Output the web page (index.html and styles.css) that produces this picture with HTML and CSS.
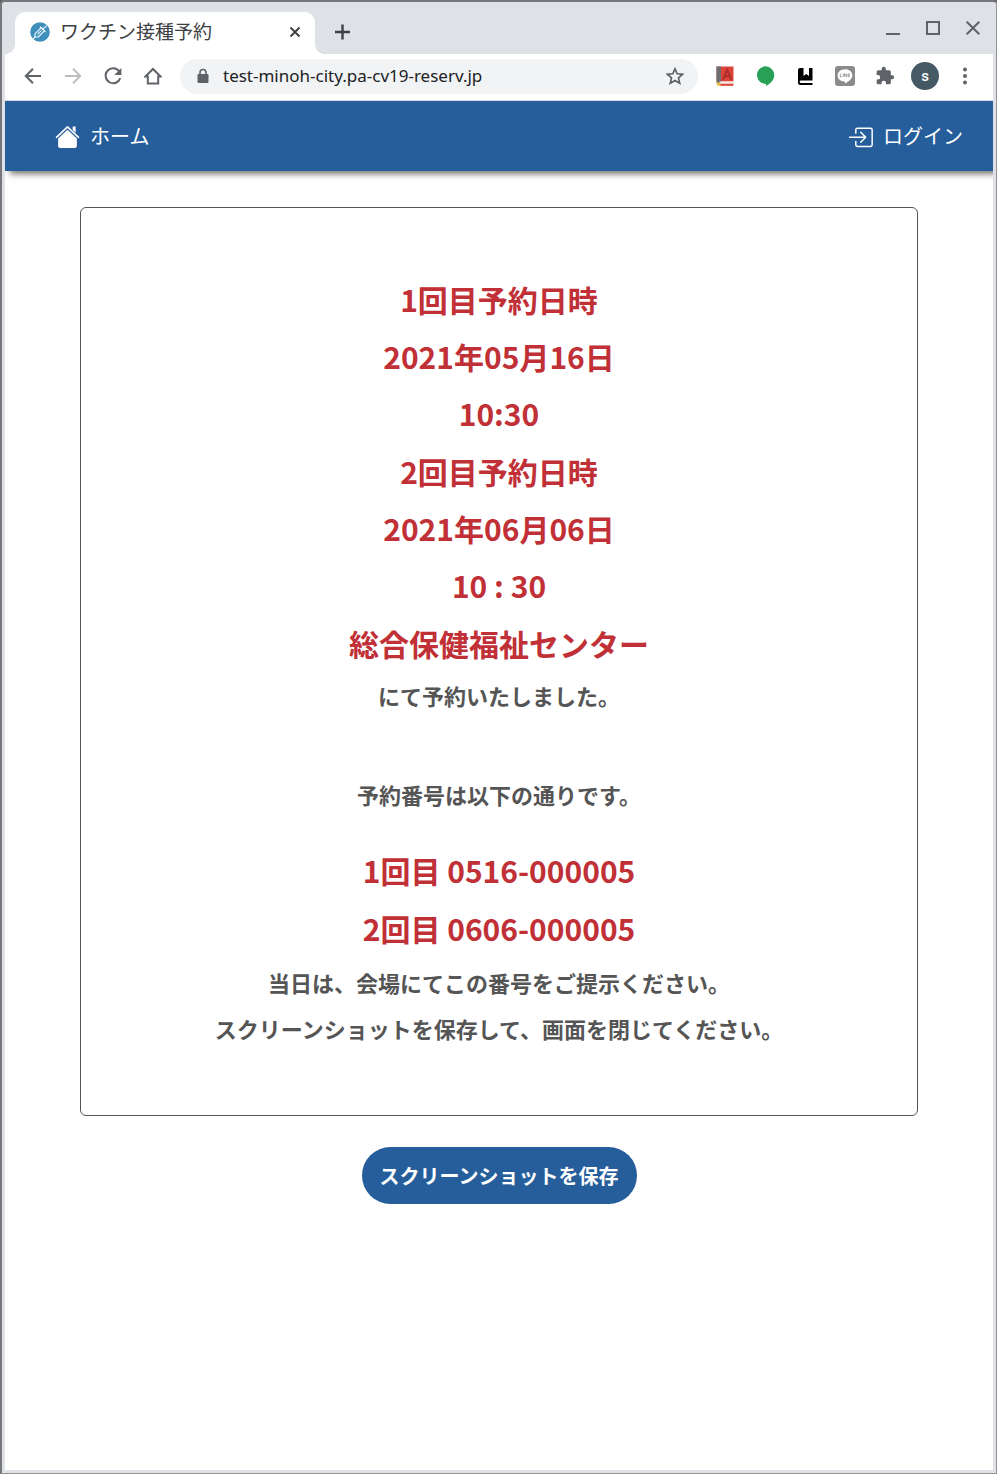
FILE: index.html
```html
<!DOCTYPE html>
<html lang="ja">
<head>
<meta charset="utf-8">
<meta name="viewport" content="width=device-width, initial-scale=1">
<title>ワクチン接種予約</title>
<link rel="stylesheet" href="styles.css">
</head>
<body>
<div class="window">
  <header class="tab-strip">
    <div class="tab">
      <svg class="favicon" viewBox="0 0 20 20" aria-hidden="true"><circle cx="10" cy="10" r="9.8" fill="#3f8fba"/><g fill="none" stroke="#e8f5fb" stroke-width="1.2" stroke-linecap="round" stroke-linejoin="round"><path d="M5 11.800 11.200 5.600 14.400 8.800 8.200 15 5 15z"/><path d="m10.400 4.800 4.800 4.800M13 7.200l3.400-3.400M5 15l-1.800 1.800M8 11.800l3-3"/></g></svg>
      <span class="tab-title">ワクチン接種予約</span>
      <button class="icon-button tab-close" aria-label="タブを閉じる"><svg viewBox="0 0 12 12"><path d="m1.5 1.5 9 9m0-9-9 9" stroke="#3c4043" stroke-width="1.9"/></svg></button>
    </div>
    <button class="icon-button new-tab" aria-label="新しいタブ"><svg viewBox="0 0 16 16"><path d="M8.500 .5v15M1 8h15" stroke="#3c4043" stroke-width="2.400"/></svg></button>
    <div class="window-controls">
      <button class="icon-button" aria-label="最小化"><svg viewBox="0 0 14 14"><path d="M0 13h14" stroke="#5f6368" stroke-width="2"/></svg></button>
      <button class="icon-button" aria-label="最大化"><svg viewBox="0 0 14 14"><path d="M1 1h12v12H1z" fill="none" stroke="#5f6368" stroke-width="2"/></svg></button>
      <button class="icon-button" aria-label="閉じる"><svg viewBox="0 0 14 14"><path d="m.7.7 12.6 12.6m0-12.6L.7 13.3" stroke="#5f6368" stroke-width="2"/></svg></button>
    </div>
  </header>

  <div class="toolbar">
    <div class="tool-group">
      <button class="icon-button" aria-label="戻る"><svg viewBox="0 0 18 18"><path d="M17 9H2M9 1.8 1.8 9 9 16.2" fill="none" stroke="#5f6368" stroke-width="2"/></svg></button>
      <button class="icon-button" aria-label="進む"><svg viewBox="0 0 18 18"><path d="M1 9h15M9 1.8 16.2 9 9 16.2" fill="none" stroke="#bcbec0" stroke-width="2"/></svg></button>
      <button class="icon-button" aria-label="再読み込み"><svg viewBox="0 0 18 18"><path d="M15.2 4.3A7.5 7.5 0 1 0 16.3 11" fill="none" stroke="#5f6368" stroke-width="2"/><path d="M17.4 1v7h-7z" fill="#5f6368"/></svg></button>
      <button class="icon-button" aria-label="ホームページ"><svg viewBox="0 0 18 18"><path d="M1.4 9.5 9 2l7.6 7.5h-2.4v7H3.8v-7z" fill="none" stroke="#5f6368" stroke-width="2"/></svg></button>
    </div>
    <div class="address-bar">
      <svg class="lock" viewBox="0 0 12 16" aria-hidden="true"><path d="M3 7V4.5a3 3 0 0 1 6 0V7" fill="none" stroke="#5f6368" stroke-width="1.6"/><rect x=".5" y="6" width="11" height="9" rx="1.2" fill="#5f6368"/></svg>
      <input class="url" type="text" aria-label="アドレス" value="test-minoh-city.pa-cv19-reserv.jp">
      <button class="icon-button" aria-label="ブックマーク"><svg viewBox="0 0 18 18"><path d="m9 1.8 2.2 5 5.4.5-4.1 3.6 1.2 5.3L9 13.4l-4.7 2.8 1.2-5.3-4.1-3.6 5.4-.5z" fill="none" stroke="#5f6368" stroke-width="1.7"/></svg></button>
    </div>
    <div class="tool-group">
      <button class="icon-button large" aria-label="辞書"><svg viewBox="0 0 20 20"><path d="M1.500 .5h17v15h-17z" fill="#db4437"/><path d="M1.500 .5H6v17H1.500z" fill="#6d6e70"/><path d="M4.500 15.500h14v2.300h-14z" fill="#f3e4e1"/><path d="M5 17.800h13.500v2H5z" fill="#db4437"/><path d="M2 16.200l2 .6 2.500 3L2 19.500z" fill="#f4b72f"/><path d="m8 13.500 4.200-10 4.200 10M9.500 10.200h5.400" fill="none" stroke="#ad2f2c" stroke-width="2"/></svg></button>
      <button class="icon-button large" aria-label="チャット"><svg viewBox="0 0 20 20"><path d="M10.500 .3a8.800 8.800 0 0 1 8.800 8.800c0 4.900-3.800 8.900-8.300 10.900v-2.100A8.800 8.800 0 1 1 10.500 .3z" fill="#28a055"/></svg></button>
      <button class="icon-button large" aria-label="読書メモ"><svg viewBox="0 0 20 20"><path d="M5 2h3.500v8l2.700-2 2.800 2V2h3.500v12.500H5.700c-1.400 0-1.400 2.500 0 2.500h11.800v2H5a2.200 2.200 0 0 1-2-2.500V4a2 2 0 0 1 2-2z" fill="#000"/></svg></button>
      <button class="icon-button large" aria-label="LINE"><svg viewBox="0 0 20 20"><rect width="20" height="20" rx="3" fill="#8b8b8b"/><path d="M10 3.2c4.2 0 7.4 2.7 7.4 6.2 0 3.2-3.6 5.800-7.400 8.200v-2.200c-4.600 0-7.400-2.600-7.400-6S5.800 3.200 10 3.200z" fill="#fff"/><path d="M5.300 7.600v3.200h1.800M8.200 7.600v3.200M9.600 10.800V7.600l2 3.200V7.600M14.900 7.900h-1.800v2.700h1.800M13.100 9.200h1.600" fill="none" stroke="#8b8b8b" stroke-width=".8"/></svg></button>
      <button class="icon-button large" aria-label="拡張機能"><svg viewBox="0 0 24 24"><path d="M20.500 11H19V7a2 2 0 0 0-2-2h-4V3.500a2.500 2.500 0 0 0-5 0V5H4a2 2 0 0 0-2 2v3.800h1.500a2.700 2.700 0 0 1 0 5.400H2V20a2 2 0 0 0 2 2h3.800v-1.500a2.700 2.700 0 0 1 5.400 0V22H17a2 2 0 0 0 2-2v-4h1.500a2.500 2.500 0 0 0 0-5z" fill="#5f6368"/></svg></button>
    </div>
    <button class="avatar" aria-label="プロフィール">s</button>
    <button class="icon-button menu" aria-label="メニュー"><svg viewBox="0 0 18 18"><g fill="#5f6368"><circle cx="9" cy="2.500" r="2"/><circle cx="9" cy="9" r="2"/><circle cx="9" cy="15.500" r="2"/></g></svg></button>
  </div>

  <div class="page">
    <nav class="site-nav">
      <a class="nav-link" href="#home"><svg viewBox="0 0 24 24" aria-hidden="true"><path d="M17 2.500h2.800v6l-2.800-3z" fill="#fff"/><path d="M1.400 12.800 12 2.800l10.600 10" fill="none" stroke="#fff" stroke-width="1.500" stroke-linecap="round" stroke-linejoin="round"/><path d="m12 5.400 9 8.400V21a2 2 0 0 1-2 2H5a2 2 0 0 1-2-2v-7.200z" fill="#fff"/></svg>ホーム</a>
      <a class="nav-link" href="#login"><svg viewBox="0 0 24 24" aria-hidden="true"><g fill="none" stroke="#fff" stroke-width="1.400" stroke-linecap="round" stroke-linejoin="round"><path d="M7.500 8.800V5.500A1.500 1.500 0 0 1 9 4h12.700a1.500 1.500 0 0 1 1.500 1.500v14.500a1.500 1.500 0 0 1-1.500 1.500H9A1.500 1.500 0 0 1 7.500 20v-3.200"/><path d="M1.500 12.800h15.500m-4.800-4.800 4.800 4.800-4.800 4.800"/></g></svg>ログイン</a>
    </nav>
    <main class="content">
      <section class="card">
        <div class="booking">
          <div class="slot"><p>1回目予約日時</p><p>2021年05月16日</p><p>10:30</p></div>
          <div class="slot"><p>2回目予約日時</p><p>2021年06月06日</p><p>10 : 30</p></div>
          <p>総合保健福祉センター</p>
        </div>
        <p class="note">にて予約いたしました。</p>
        <p class="note numbers-intro">予約番号は以下の通りです。</p>
        <div class="numbers"><p>1回目 0516-000005</p><p>2回目 0606-000005</p></div>
        <p class="note">当日は、会場にてこの番号をご提示ください。</p>
        <p class="note">スクリーンショットを保存して、画面を閉じてください。</p>
      </section>
      <button class="save-button">スクリーンショットを保存</button>
    </main>
  </div>
</div>
</body>
</html>
```
FILE: styles.css
```css
* { box-sizing: border-box; }
body {
  margin: 0;
  background: #5c5a5e;
  font-family: "Noto Sans CJK JP", "Noto Sans", sans-serif;
}
p { margin: 0; }
button { font: inherit; cursor: pointer; }

.window {
  display: flex;
  flex-direction: column;
  min-height: 100vh;
  padding: 0 3px 3px;
  border: 1px solid #929297;
  border-top: 2px solid #77777b;
  border-left: 2px solid #77777b;
  border-radius: 4px 4px 0 0;
  background: #dee1e6;
}
.icon-button {
  display: grid;
  place-items: center;
  flex: none;
  width: 18px;
  height: 18px;
  padding: 0;
  border: 0;
  background: none;
}
.icon-button svg { display: block; width: 100%; height: 100%; }
.icon-button.large { width: 20px; height: 20px; }

.tab-strip { display: flex; height: 52px; padding: 10px 10px 0; }
.tab {
  position: relative;
  display: flex;
  align-items: center;
  width: 300px;
  padding: 0 14px 2px 15px;
  border-radius: 10px 10px 0 0;
  background: #fff;
}
.tab::before,
.tab::after {
  content: "";
  position: absolute;
  bottom: 0;
  width: 10px;
  height: 10px;
}
.tab::before { right: 100%; background: radial-gradient(circle at 0 0, transparent 10px, #fff 10px); }
.tab::after { left: 100%; background: radial-gradient(circle at 100% 0, transparent 10px, #fff 10px); }
.favicon { width: 20px; height: 20px; }
.tab-title { flex: 1; margin-left: 10px; padding-bottom: 2px; font-size: 19px; line-height: 28px; color: #3c4043; }
.tab-close { width: 12px; height: 12px; }
.new-tab { width: 16px; height: 16px; margin: 12px 0 0 19px; }
.window-controls { display: flex; gap: 26px; margin: 9px 3px 0 auto; }
.window-controls .icon-button { width: 14px; height: 14px; }

.toolbar {
  display: flex;
  align-items: center;
  height: 47px;
  padding: 0 19px 2px;
  border-bottom: 1px solid #d5d7da;
  background: #fff;
}
.tool-group { display: flex; align-items: center; gap: 22px; }
.tool-group + .address-bar { margin-left: 18px; }
.address-bar {
  display: flex;
  flex: 1;
  align-items: center;
  height: 35px;
  margin-right: 17px;
  padding: 0 14px 0 17px;
  border-radius: 18px;
  background: #f1f3f4;
}
.lock { width: 12px; height: 16px; }
.url {
  flex: 1;
  min-width: 0;
  margin-left: 14px;
  padding: 0;
  border: 0;
  background: none;
  color: #202124;
  font: 17px/24px "Noto Sans", sans-serif;
}
.address-bar ~ .tool-group { gap: 20px; }
.avatar {
  width: 28px;
  height: 28px;
  margin-left: 16px;
  padding: 0;
  border: 0;
  border-radius: 50%;
  background: #455a64;
  color: #fff;
  font: 500 15px/20px Roboto, sans-serif;
}
.menu { margin: 0 0 0 17px; }

.page { flex: 1; background: #fff; overflow: hidden; }
.site-nav {
  display: flex;
  align-items: center;
  justify-content: space-between;
  height: 70px;
  padding: 0 30px 0 50px;
  background: #265e9c;
  box-shadow: 5px 3px 6px rgba(70, 60, 60, 0.7);
}
.nav-link {
  display: flex;
  align-items: center;
  gap: 10px;
  color: #fff;
  font-size: 20px;
  line-height: 30px;
  text-decoration: none;
}
.nav-link svg { width: 25px; height: 25px; }

.content {
  display: flex;
  flex-direction: column;
  align-items: center;
  padding: 36px 75px;
}
.card {
  width: 100%;
  padding: 63px 24px 64px;
  border: 1px solid #555;
  border-radius: 6px;
  color: #555;
  font-weight: bold;
  text-align: center;
}
.booking,
.numbers { color: #c03036; font-size: 30px; line-height: 57px; }
.booking,
.numbers { display: grid; gap: 1px; }
.note { font-size: 22px; line-height: 46px; }
.numbers-intro { margin-top: 53px; }
.numbers { margin: 25px 0 2px; }
.save-button {
  min-height: 57px;
  margin-top: 31px;
  padding: 0 18px;
  border: 0;
  border-radius: 29px;
  background: #265e9c;
  color: #fff;
  font-size: 20px;
  font-weight: bold;
}
```
